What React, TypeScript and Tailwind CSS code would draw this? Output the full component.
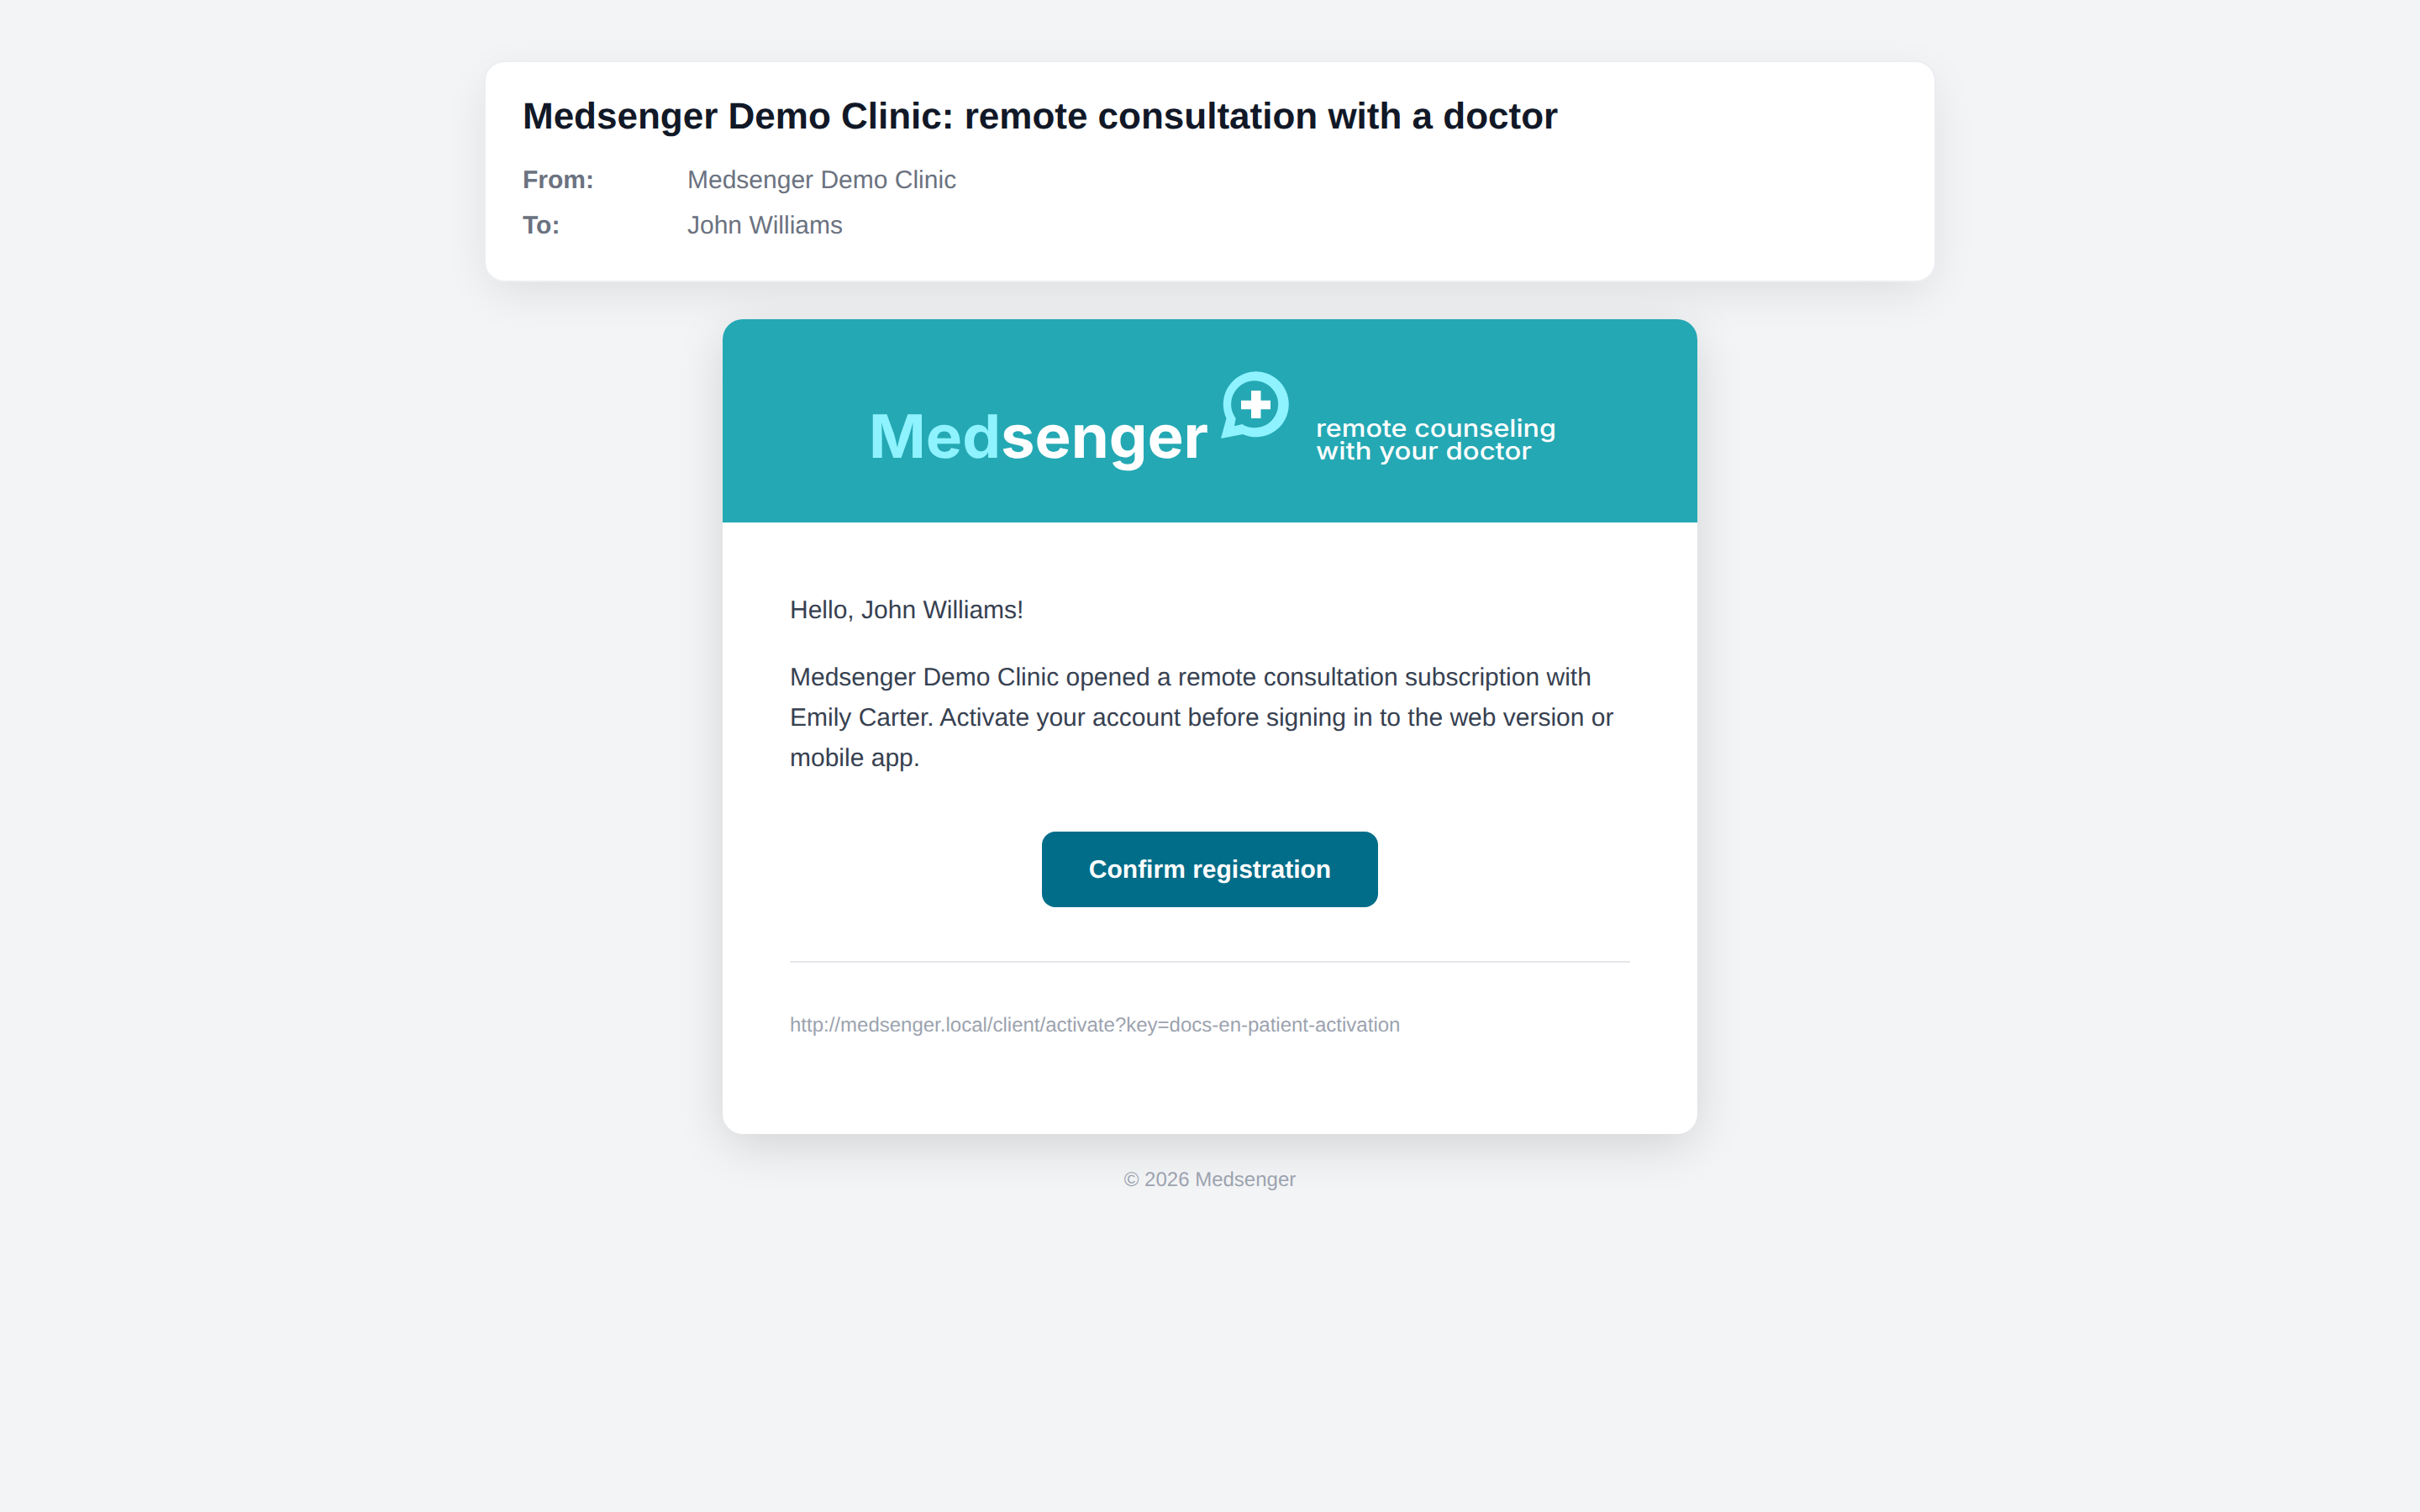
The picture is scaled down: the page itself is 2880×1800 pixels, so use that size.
export default function App() {
  return (
    <div className="min-h-screen bg-[#f3f4f6] [font-family:'Liberation_Sans',Arial,sans-serif] [text-rendering:geometricPrecision] flex flex-col items-center pt-[72px]">
      <div className="w-[1728px] h-[264px] bg-white border-2 border-[#e5e7eb]/70 rounded-[24px] shadow-[0_16px_56px_-8px_rgb(0_0_0/0.1)] px-[44px] pt-[37px]">
        <h1 className="text-[44px] leading-[56px] font-bold text-[#111827]">Medsenger Demo Clinic: remote consultation with a doctor</h1>
        <div className="mt-[28px] flex flex-col gap-[14px] text-[30px] leading-[40px] text-[#6b7280]">
          <div className="flex">
            <span className="w-[196px] font-bold">From:</span>
            <span>Medsenger Demo Clinic</span>
          </div>
          <div className="flex">
            <span className="w-[196px] font-bold">To:</span>
            <span>John Williams</span>
          </div>
        </div>
      </div>

      <div className="mt-[44px] w-[1160px] h-[970px] bg-white rounded-[24px] overflow-hidden shadow-[0_14px_60px_-4px_rgb(0_0_0/0.15)]">
        <div className="h-[242px] bg-[#24a8b4] flex justify-center">
          <svg width="840" height="242" viewBox="0 0 840 242" className="block">
            <g style={{ fontFamily: "Inter, sans-serif" }}>
              <text x="14" y="165" fontSize="71" fontWeight="700" fill="#8ef3ff" textLength="157" lengthAdjust="spacingAndGlyphs">Med</text>
              <text x="171" y="165" fontSize="71" fontWeight="700" fill="#ffffff" textLength="247" lengthAdjust="spacingAndGlyphs">senger</text>
              <text x="546" y="139.5" fontSize="29" fontWeight="500" fill="#ffffff" textLength="286" lengthAdjust="spacingAndGlyphs">remote counseling</text>
              <text x="546" y="166.5" fontSize="29" fontWeight="500" fill="#ffffff" textLength="257" lengthAdjust="spacingAndGlyphs">with your doctor</text>
            </g>
            <g transform="translate(400 50)">
              <path fill="#8ef3ff" fillRule="evenodd" d="M39.5 68A39 39 0 1 1 59 87L33 92ZM50.7 68A28 28 0 1 1 58.3 75L49 77.3Z" />
              <path fill="#ffffff" d="M69 35h11.5v11.7h11.5v10.6h-11.5v10.7h-11.5v-10.7h-12v-10.6h12z" />
            </g>
          </svg>
        </div>
        <div className="px-[80px] pt-[81px] text-[30px] leading-[48px] text-[#374151]">
          <p>Hello, John Williams!</p>
          <p className="mt-[32px]">Medsenger Demo Clinic opened a remote consultation subscription with Emily Carter. Activate your account before signing in to the web version or mobile app.</p>
          <div className="mt-[63px] flex justify-center">
            <a className="w-[400px] h-[90px] pt-[2px] rounded-[16px] bg-[#026d89] flex items-center justify-center text-[30px] font-bold text-white">Confirm registration</a>
          </div>
          <div className="mt-[64px] h-[2px] bg-[#e5e7eb]" />
          <p className="mt-[55px] text-[24px] leading-[40px] text-[#9ca3af]">http://medsenger.local/client/activate?key=docs-en-patient-activation</p>
        </div>
      </div>
      <p className="mt-[39px] text-[24px] leading-[32px] text-[#9ca3af]">© 2026 Medsenger</p>
    </div>
  );
}
